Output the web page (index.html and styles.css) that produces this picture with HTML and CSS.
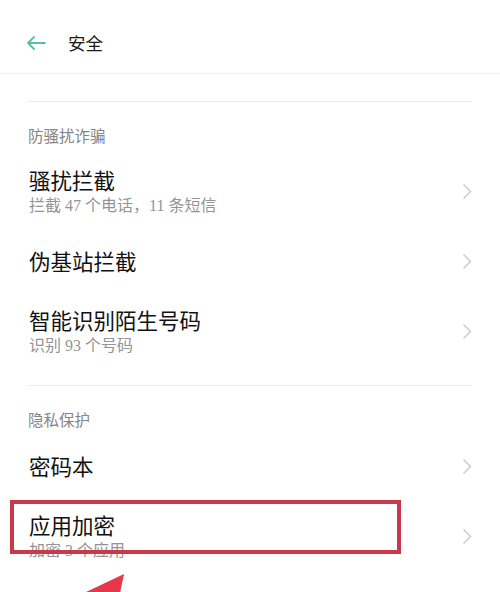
FILE: index.html
```html
<!DOCTYPE html>
<html lang="zh">
<head>
<meta charset="utf-8">
<link rel="stylesheet" href="styles.css">
</head>
<body>
<div class="page">
  <header class="topbar">
    <svg class="back" width="20" height="14" viewBox="0 0 20 14"><path d="M19 7H2M8 1L2 7l6 6" fill="none" stroke="#55c29c" stroke-width="1.8" stroke-linecap="round" stroke-linejoin="round"/></svg>
    <span class="title">安全</span>
  </header>
  <div class="gap"></div>
  <div class="divider"></div>
  <section class="group first">
    <div class="group-title first">防骚扰诈骗</div>
    <div class="item">
      <div class="texts"><div class="name">骚扰拦截</div><div class="sub">拦截 47 个电话，11 条短信</div></div>
      <svg class="chev" width="10" height="17" viewBox="0 0 10 17"><path d="M1.5 1.5l7 7-7 7" fill="none" stroke="#c9c9c9" stroke-width="1.4"/></svg>
    </div>
    <div class="item">
      <div class="texts"><div class="name">伪基站拦截</div></div>
      <svg class="chev" width="10" height="17" viewBox="0 0 10 17"><path d="M1.5 1.5l7 7-7 7" fill="none" stroke="#c9c9c9" stroke-width="1.4"/></svg>
    </div>
    <div class="item">
      <div class="texts"><div class="name">智能识别陌生号码</div><div class="sub">识别 93 个号码</div></div>
      <svg class="chev" width="10" height="17" viewBox="0 0 10 17"><path d="M1.5 1.5l7 7-7 7" fill="none" stroke="#c9c9c9" stroke-width="1.4"/></svg>
    </div>
  </section>
  <div class="divider"></div>
  <section class="group">
    <div class="group-title">隐私保护</div>
    <div class="item">
      <div class="texts"><div class="name">密码本</div></div>
      <svg class="chev" width="10" height="17" viewBox="0 0 10 17"><path d="M1.5 1.5l7 7-7 7" fill="none" stroke="#c9c9c9" stroke-width="1.4"/></svg>
    </div>
    <div class="item">
      <div class="texts"><div class="name">应用加密</div><div class="sub">加密 3 个应用</div></div>
      <svg class="chev" width="10" height="17" viewBox="0 0 10 17"><path d="M1.5 1.5l7 7-7 7" fill="none" stroke="#c9c9c9" stroke-width="1.4"/></svg>
    </div>
  </section>
  <div class="highlight"></div>
  <svg class="pointer" width="500" height="40" viewBox="0 0 500 40"><polygon points="124,22 84,41 120,41" fill="#e8364b"/></svg>
</div>
</body>
</html>
```
FILE: styles.css
```css
html, body {
  margin: 0;
  padding: 0;
  background: #fff;
}
.page {
  position: relative;
  width: 500px;
  height: 592px;
  overflow: hidden;
  font-family: "Noto Sans CJK SC", "Noto Sans", sans-serif;
  color: #151515;
}
.topbar {
  height: 61px;
  padding-top: 12px;
  display: flex;
  align-items: center;
  border-bottom: 1px solid #f0f0f0;
  box-sizing: content-box;
}
.back {
  margin-left: 26px;
  margin-right: 22px;
}
.title {
  font-size: 17.5px;
  color: #1a1a1a;
  line-height: 20px;
}
.gap {
  height: 27px;
}
.divider {
  height: 1px;
  background: #ececec;
  margin: 0 28px;
}
.group.first {
  padding-bottom: 19px;
}
.group-title {
  font-size: 15.5px;
  line-height: 20px;
  color: #858585;
  padding: 23px 28px 2px;
}
.group-title.first {
  padding-bottom: 11px;
}
.item {
  height: 70px;
  display: flex;
  align-items: center;
  justify-content: space-between;
  padding: 0 28px 0 29px;
}
.name {
  font-size: 21.5px;
  line-height: 28px;
  color: #111;
  font-weight: 400;
}
.sub {
  font-family: "Liberation Serif", "Noto Sans CJK SC", serif;
  font-size: 16px;
  line-height: 20px;
  margin-top: 2px;
  color: #949494;
}
.chev {
  flex: none;
}
.highlight {
  position: absolute;
  left: 10px;
  top: 500px;
  width: 383px;
  height: 46px;
  border: 4px solid #c9384b;
}
.pointer {
  position: absolute;
  left: 0;
  top: 552px;
}
```
